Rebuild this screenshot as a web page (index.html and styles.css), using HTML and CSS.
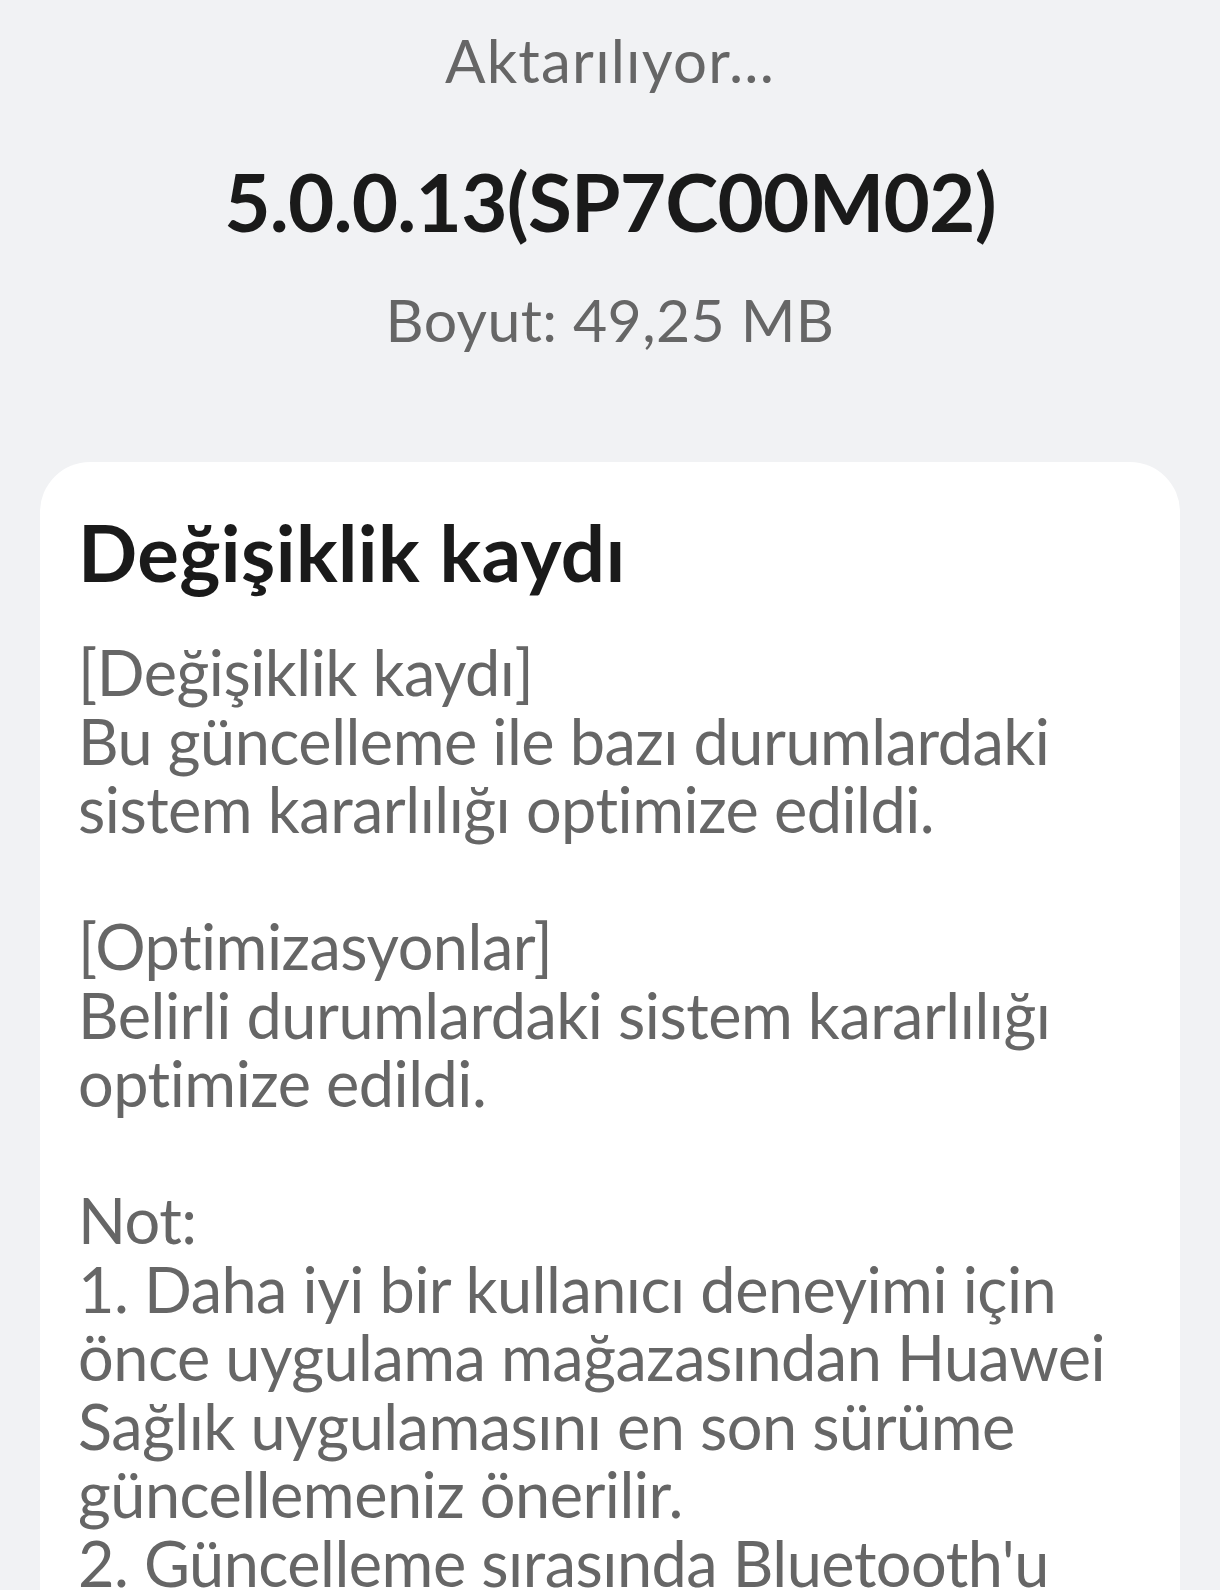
FILE: index.html
```html
<!DOCTYPE html>
<html lang="tr">
<head>
<meta charset="utf-8">
<title>Güncelleme</title>
<link rel="stylesheet" href="styles.css">
</head>
<body>
<main class="screen">
  <header class="summary">
    <p class="status">Aktarılıyor...</p>
    <h1 class="version">5.0.0.13(SP7C00M02)</h1>
    <p class="size">Boyut: 49,25 MB</p>
  </header>
  <section class="card">
    <h2 class="card-title">Değişiklik kaydı</h2>
    <div class="changelog">
      <p class="para">[Değişiklik kaydı]<br>Bu güncelleme ile bazı durumlardaki<br>sistem kararlılığı optimize edildi.</p>
      <p class="para">[Optimizasyonlar]<br>Belirli durumlardaki sistem kararlılığı<br>optimize edildi.</p>
      <p class="para">Not:<br>1. Daha iyi bir kullanıcı deneyimi için<br>önce uygulama mağazasından Huawei<br>Sağlık uygulamasını en son sürüme<br>güncellemeniz önerilir.<br>2. Güncelleme sırasında Bluetooth'u</p>
    </div>
  </section>
</main>
</body>
</html>
```
FILE: styles.css
```css
html, body {
  margin: 0;
  padding: 0;
  background: #f1f2f4;
}
body {
  font-family: "Lato", "Noto Sans", sans-serif;
  overflow: hidden;
  height: 1590px;
}
.screen {
  display: flex;
  flex-direction: column;
}
.summary {
  display: flex;
  flex-direction: column;
  align-items: center;
  padding-top: 24px;
}
.status {
  margin: 0;
  font-size: 60px;
  line-height: 72px;
  color: #666666;
  letter-spacing: 1.2px;
}
.version {
  margin: 57px 0 0;
  font-size: 80px;
  line-height: 96px;
  font-weight: 700;
  color: #1a1a1a;
  letter-spacing: -0.8px;
}
.size {
  margin: 35px 0 0;
  font-size: 59px;
  line-height: 71px;
  color: #666666;
  letter-spacing: 0.4px;
}
.card {
  margin: 107px 40px 0;
  background: #ffffff;
  border-radius: 50px 50px 0 0;
  padding: 43px 38px 200px;
}
.card-title {
  margin: 0;
  font-size: 78px;
  line-height: 94px;
  font-weight: 700;
  color: #1a1a1a;
  letter-spacing: 0.4px;
}
.changelog {
  margin-top: 39px;
  display: flex;
  flex-direction: column;
  gap: 68.5px;
}
.para {
  margin: 0;
  font-size: 63px;
  line-height: 68.5px;
  color: #666666;
  letter-spacing: -0.5px;
  white-space: nowrap;
}
```
